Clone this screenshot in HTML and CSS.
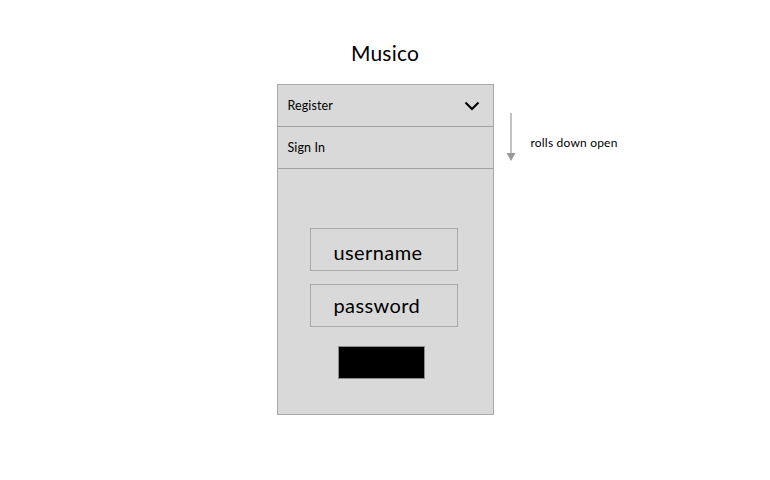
FILE: index.html
```html
<!DOCTYPE html>
<html>
<head>
<meta charset="utf-8">
<link rel="stylesheet" href="styles.css">
</head>
<body>
<div class="page">
  <h1 class="title">Musico</h1>
  <div class="stage">
    <div class="panel">
      <div class="row">
        <span>Register</span>
        <svg class="chev" width="16" height="10" viewBox="0 0 16 10"><path d="M1.5 1.5 L8 8 L14.5 1.5" fill="none" stroke="#000" stroke-width="2"/></svg>
      </div>
      <div class="row">
        <span>Sign In</span>
      </div>
      <div class="form">
        <div class="field">username</div>
        <div class="field">password</div>
        <div class="submit"></div>
      </div>
    </div>
    <div class="note">
      <svg class="arrow" width="12" height="50" viewBox="0 0 12 50"><line x1="6" y1="0" x2="6" y2="41" stroke="#9a9a9a" stroke-width="1.2"/><path d="M1.5 40 L10.5 40 L6 48 Z" fill="#9a9a9a"/></svg>
      <span class="note-text">rolls down open</span>
    </div>
  </div>
</div>
</body>
</html>
```
FILE: styles.css
```css
* { box-sizing: border-box; }
html, body { margin: 0; padding: 0; background: #fff; }
body { font-family: Lato, "Noto Sans", sans-serif; color: #000; width: 770px; height: 480px; overflow: hidden; }
.page { display: flex; flex-direction: column; align-items: center; padding-top: 40px; }
.title { margin: 0; font-size: 21px; font-weight: 400; line-height: 26px; padding-left: 0; letter-spacing: 0.2px; }
.stage { position: relative; margin-top: 18px; }
.panel { width: 217px; height: 331px; background: #d9d9d9; border: 1px solid #a9a9a9; display: flex; flex-direction: column; }
.row { height: 42px; border-bottom: 1px solid #a0a0a0; display: flex; align-items: center; justify-content: space-between; padding: 0 13px 0 10px; font-size: 12.5px; letter-spacing: 0.1px; }
.chev { margin-top: 1px; }
.form { display: flex; flex-direction: column; align-items: flex-start; padding-top: 59px; padding-left: 32px; }
.field { width: 148px; height: 43px; border: 1px solid #a9a9a9; font-size: 20px; padding: 11px 0 0 23px; line-height: 24px; margin-bottom: 13px; letter-spacing: 0.4px; }
.field + .field { margin-bottom: 19px; padding-top: 8px; }
.submit { width: 87px; height: 33px; background: #000; border: 1px solid #8c8c8c; margin-left: 28px; }
.note { position: absolute; left: 228px; top: 29px; display: flex; align-items: flex-start; white-space: nowrap; }
.arrow { display: block; flex-shrink: 0; }
.note-text { font-size: 12px; margin-left: 14px; margin-top: 22px; letter-spacing: 0.2px; }
```
